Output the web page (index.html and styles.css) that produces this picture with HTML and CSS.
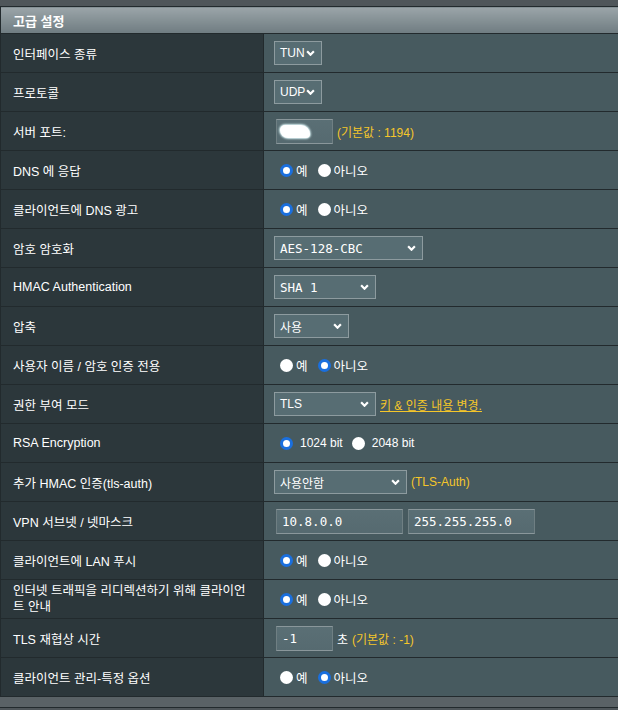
FILE: index.html
```html
<!DOCTYPE html>
<html lang="ko">
<head>
<meta charset="utf-8">
<link rel="stylesheet" href="styles.css">
</head>
<body>
<table class="form">
  <colgroup><col class="c1"><col class="c2"></colgroup>
  <thead>
    <tr><td colspan="2" class="head">고급 설정</td></tr>
  </thead>
  <tbody>
    <tr><th>인터페이스 종류</th><td><div class="sel w48 sans"><span>TUN</span><svg class="chev" viewBox="0 0 8 5"><path d="M1 1 L4 4 L7 1"/></svg></div></td></tr>
    <tr><th>프로토콜</th><td><div class="sel w48 sans"><span>UDP</span><svg class="chev" viewBox="0 0 8 5"><path d="M1 1 L4 4 L7 1"/></svg></div></td></tr>
    <tr><th>서버 포트:</th><td><div class="row"><div class="inp w57"><span class="blob"></span></div><span class="hint">(기본값 : 1194)</span></div></td></tr>
    <tr><th>DNS 에 응답</th><td><div class="radios"><span class="radio on"></span><span class="rl">예</span><span class="radio"></span><span class="rl">아니오</span></div></td></tr>
    <tr><th>클라이언트에 DNS 광고</th><td><div class="radios"><span class="radio on"></span><span class="rl">예</span><span class="radio"></span><span class="rl">아니오</span></div></td></tr>
    <tr><th>암호 암호화</th><td><div class="sel w149 mono"><span>AES-128-CBC</span><svg class="chev" viewBox="0 0 8 5"><path d="M1 1 L4 4 L7 1"/></svg></div></td></tr>
    <tr><th>HMAC Authentication</th><td><div class="sel w102 mono"><span>SHA 1</span><svg class="chev" viewBox="0 0 8 5"><path d="M1 1 L4 4 L7 1"/></svg></div></td></tr>
    <tr><th>압축</th><td><div class="sel w75 sans"><span>사용</span><svg class="chev" viewBox="0 0 8 5"><path d="M1 1 L4 4 L7 1"/></svg></div></td></tr>
    <tr><th>사용자 이름 / 암호 인증 전용</th><td><div class="radios"><span class="radio"></span><span class="rl">예</span><span class="radio on"></span><span class="rl">아니오</span></div></td></tr>
    <tr><th>권한 부여 모드</th><td><div class="row"><div class="sel w102 sans"><span>TLS</span><svg class="chev" viewBox="0 0 8 5"><path d="M1 1 L4 4 L7 1"/></svg></div><a class="link" href="#">키 &amp; 인증 내용 변경.</a></div></td></tr>
    <tr><th>RSA Encryption</th><td><div class="radios rsa"><span class="radio on"></span><span class="rl">1024 bit</span><span class="radio"></span><span class="rl">2048 bit</span></div></td></tr>
    <tr><th>추가 HMAC 인증(tls-auth)</th><td><div class="row"><div class="sel w133 sans"><span>사용안함</span><svg class="chev" viewBox="0 0 8 5"><path d="M1 1 L4 4 L7 1"/></svg></div><span class="hint">(TLS-Auth)</span></div></td></tr>
    <tr><th>VPN 서브넷 / 넷마스크</th><td><div class="row two"><div class="inp w127 mono">10.8.0.0</div><div class="inp w127 mono">255.255.255.0</div></div></td></tr>
    <tr><th>클라이언트에 LAN 푸시</th><td><div class="radios"><span class="radio on"></span><span class="rl">예</span><span class="radio"></span><span class="rl">아니오</span></div></td></tr>
    <tr><th class="wrap">인터넷 트래픽을 리디렉션하기 위해 클라이언<br>트 안내</th><td><div class="radios"><span class="radio on"></span><span class="rl">예</span><span class="radio"></span><span class="rl">아니오</span></div></td></tr>
    <tr><th>TLS 재협상 시간</th><td><div class="row"><div class="inp w57 mono">-1</div><span class="unit">초</span><span class="hint">(기본값 : -1)</span></div></td></tr>
    <tr><th>클라이언트 관리-특정 옵션</th><td><div class="radios"><span class="radio"></span><span class="rl">예</span><span class="radio on"></span><span class="rl">아니오</span></div></td></tr>
  </tbody>
</table>
<div class="after"></div>
</body>
</html>
```
FILE: styles.css
```css
html, body {
  margin: 0;
  padding: 0;
}
body {
  background: #4f565a;
  padding-top: 6px;
  font-family: "Liberation Sans", "Noto Sans CJK KR", sans-serif;
  font-size: 12px;
  color: #ffffff;
  overflow: hidden;
  width: 618px;
  height: 710px;
  box-sizing: border-box;
}
.form {
  border-collapse: collapse;
  table-layout: fixed;
  width: 618px;
}
.c1 { width: 263px; }
.form td, .form th {
  border: 1px solid #222a2d;
  padding: 0;
}
.form td:last-child { border-right: 0; }
.head {
  height: 26px;
  background: linear-gradient(#9ba5a9, #6f7c81);
  font-weight: bold;
  font-size: 13px;
  padding: 0 0 0 12px !important;
  color: #ffffff;
}
.form th {
  background: #2c373b;
  text-align: left;
  font-weight: normal;
  height: 38px;
  padding-left: 12px;
  color: #ffffff;
  font-size: 12.5px;
}
.form th.wrap {
  white-space: nowrap;
  line-height: 16px;
}
.form tbody td {
  background: #475a5f;
  height: 38px;
  padding-left: 10px;
}
.row {
  display: flex;
  align-items: center;
}
.sel {
  display: flex;
  align-items: center;
  justify-content: space-between;
  box-sizing: border-box;
  height: 24px;
  background: #576d73;
  border: 1px solid #8d9b9f;
  padding: 0 6px 0 5px;
  color: #ffffff;
}
.sans { font-family: "Liberation Sans", "Noto Sans CJK KR", sans-serif; font-size: 12px; }
.mono { font-family: "DejaVu Sans Mono", "Noto Sans CJK KR", monospace; font-size: 12.5px; }
.chev {
  width: 9px;
  height: 6px;
  fill: none;
  stroke: #ffffff;
  stroke-width: 2;
}
.w48 { width: 48px; }
.w57 { width: 57px; }
.w75 { width: 75px; }
.w102 { width: 102px; }
.w127 { width: 127px; }
.w133 { width: 133px; }
.w149 { width: 149px; }
.inp {
  box-sizing: border-box;
  height: 25px;
  background: linear-gradient(#5a6f75, #566a70);
  border: 1px solid #8a979b;
  border-left-color: #6f7f83;
  border-right-color: #6f7f83;
  margin-left: 2px;
  padding-left: 5px;
  display: flex;
  align-items: center;
  color: #ffffff;
}
.two .inp + .inp { margin-left: 5px; }
.blob {
  display: block;
  width: 30px;
  height: 13px;
  background: #ffffff;
  border-radius: 5px 9px 4px 8px;
  box-shadow: 0 0 2px 1px #d9f1f3;
  filter: blur(0.6px);
  margin-left: -2px;
}
.hint {
  color: #f5c62a;
  margin-left: 4px;
}
.unit { margin-left: 4px; }
.link {
  color: #f5c62a;
  text-decoration: underline;
  margin-left: 4px;
}
.radios {
  display: flex;
  align-items: center;
  padding-left: 6px;
  font-size: 12.5px;
}
.radio {
  box-sizing: border-box;
  width: 13px;
  height: 13px;
  border-radius: 50%;
  background: #ffffff;
  flex: none;
}
.radio.on {
  border: 3px solid #1a6fde;
}
.rl { margin-left: 3px; margin-right: 10px; }
.rsa { font-size: 12px; }
.rsa .rl { margin-left: 7px; margin-right: 9px; }
.after {
  height: 10px;
  background: #5a6266;
  border-bottom: 1px solid #222a2d;
}
```
